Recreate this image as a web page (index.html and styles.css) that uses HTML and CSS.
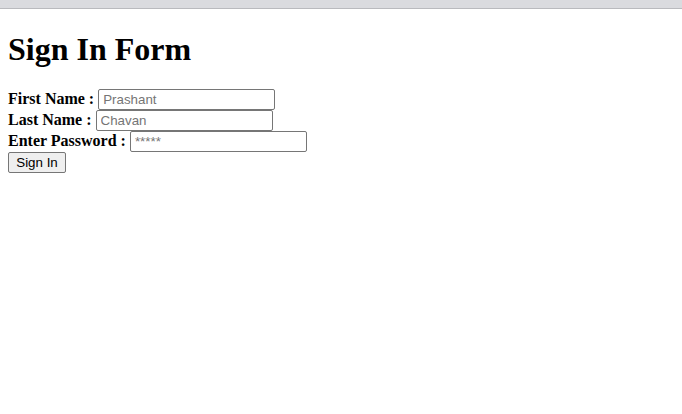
FILE: index.html
```html
<!DOCTYPE html>
<html>
<head>
<meta charset="utf-8">
<title>Sign In Form</title>
<link rel="stylesheet" href="styles.css">
</head>
<body class="page">
<div class="topbar"></div>
<main class="content">
<h1 class="title">Sign In Form</h1>
<form class="form">
<label class="label">First Name : </label><input class="field" type="text" placeholder="Prashant"><br>
<label class="label">Last Name : </label><input class="field" type="text" placeholder="Chavan"><br>
<label class="label">Enter Password : </label><input class="field" type="password" placeholder="*****"><br>
<button class="btn" type="button">Sign In</button>
</form>
</main>
</body>
</html>
```
FILE: styles.css
```css
html, body.page {
  margin: 0;
  padding: 0;
  background: #ffffff;
}
.topbar {
  height: 8px;
  background: #dadbdf;
  border-bottom: 1px solid #b9babe;
}
.content {
  padding: 0 8px;
  font-family: "Liberation Serif", "Times New Roman", serif;
  font-size: 16px;
  color: #000;
}
.title {
  font-size: 32px;
  font-weight: bold;
  margin: 21px 0;
  padding-top: 1px;
}
.label {
  font-weight: bold;
}
.field {
  font-family: "Liberation Sans", Arial, sans-serif;
  font-size: 13.333px;
  width: 177px;
  height: 21px;
  box-sizing: border-box;
  padding: 1px 4px;
  border: 1px solid #767676;
  border-radius: 2px;
  margin: 0;
}
.field::placeholder {
  color: #757575;
}
.btn {
  font-family: "Liberation Sans", Arial, sans-serif;
  font-size: 13.333px;
  width: 58px;
  height: 21px;
  padding: 1px 6px;
  border: 1px solid #767676;
  border-radius: 2px;
  background: #efefef;
  color: #000;
  margin: 0;
}
```
